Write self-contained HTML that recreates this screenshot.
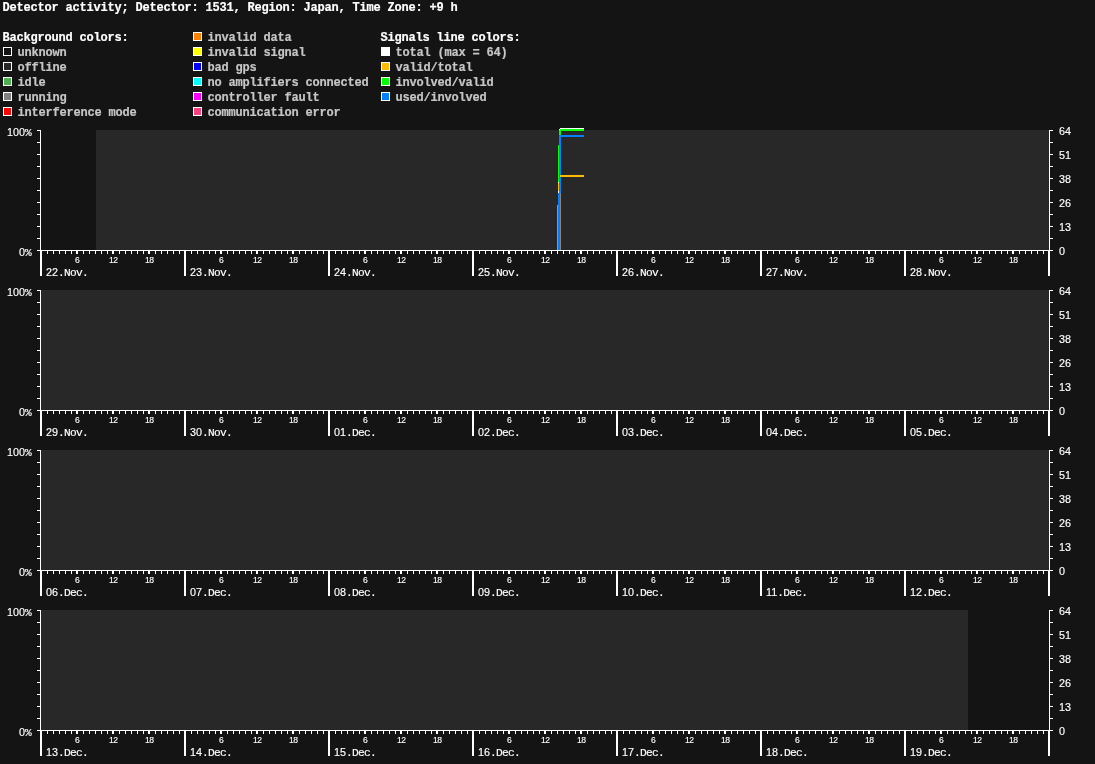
<!DOCTYPE html>
<html lang="en">
<head>
<meta charset="utf-8">
<title>Detector activity</title>
<style>
html,body{margin:0;padding:0;background:#141414;}
body{width:1095px;height:764px;position:relative;overflow:hidden;font-family:"Liberation Mono","DejaVu Sans Mono",monospace;color:#fff;}
svg{position:absolute;left:0;top:0;display:block;}
#labels{position:absolute;left:0;top:0;width:1095px;height:764px;will-change:transform;}
span{position:absolute;white-space:pre;display:block;margin:0;padding:0;}
.b{-webkit-text-stroke:0.2px currentColor;font-weight:bold;font-size:12px;letter-spacing:-0.2px;line-height:10px;height:10px;color:#c6c6c6;}
.h{color:#fff;}
.s{-webkit-text-stroke:0.15px #fff;font-size:11.2px;letter-spacing:-0.72px;line-height:9px;height:9px;}
.r{width:24px;text-align:right;}
.s b{font-family:"Liberation Sans","DejaVu Sans",sans-serif;font-weight:normal;font-size:10.79px;letter-spacing:0;}
.t{-webkit-text-stroke:0.12px #fff;font-family:"Liberation Sans","DejaVu Sans",sans-serif;font-size:8.6px;letter-spacing:-0.6px;line-height:6px;height:6px;}
</style>
</head>
<body>
<svg width="1095" height="764" viewBox="0 0 1095 764" shape-rendering="crispEdges">
<rect x="96" y="130" width="953" height="120" fill="#282828"/>
<rect x="560" y="128" width="24" height="1" fill="#ffffff"/>
<rect x="559" y="129" width="25" height="2" fill="#00ff00"/>
<rect x="559" y="129" width="2" height="7" fill="#00ff00"/>
<rect x="559" y="129" width="1" height="1" fill="#ffffff"/>
<rect x="558" y="145" width="1" height="37" fill="#00ff00"/>
<rect x="557" y="205" width="1" height="45" fill="#00ff00"/>
<rect x="558" y="182" width="1" height="1" fill="#ffffff"/>
<rect x="558" y="183" width="1" height="8" fill="#ffb900"/>
<rect x="558" y="191" width="1" height="2" fill="#ffffff"/>
<rect x="560" y="193" width="1" height="57" fill="#8c8378"/>
<rect x="559" y="135" width="25" height="2" fill="#0080ff"/>
<rect x="559" y="135" width="2" height="58" fill="#0080ff"/>
<rect x="558" y="193" width="2" height="57" fill="#0080ff"/>
<rect x="560" y="175" width="24" height="2" fill="#ffb900"/>
<rect x="40" y="130" width="1" height="121" fill="#fff"/>
<rect x="1049" y="130" width="1" height="121" fill="#fff"/>
<rect x="37" y="250" width="1016" height="1" fill="#fff"/>
<rect x="37" y="130" width="3" height="1" fill="#fff"/>
<rect x="1050" y="130" width="3" height="1" fill="#fff"/>
<rect x="37" y="142" width="3" height="1" fill="#fff"/>
<rect x="1050" y="142" width="3" height="1" fill="#fff"/>
<rect x="37" y="154" width="3" height="1" fill="#fff"/>
<rect x="1050" y="154" width="3" height="1" fill="#fff"/>
<rect x="37" y="166" width="3" height="1" fill="#fff"/>
<rect x="1050" y="166" width="3" height="1" fill="#fff"/>
<rect x="37" y="178" width="3" height="1" fill="#fff"/>
<rect x="1050" y="178" width="3" height="1" fill="#fff"/>
<rect x="37" y="190" width="3" height="1" fill="#fff"/>
<rect x="1050" y="190" width="3" height="1" fill="#fff"/>
<rect x="37" y="202" width="3" height="1" fill="#fff"/>
<rect x="1050" y="202" width="3" height="1" fill="#fff"/>
<rect x="37" y="214" width="3" height="1" fill="#fff"/>
<rect x="1050" y="214" width="3" height="1" fill="#fff"/>
<rect x="37" y="226" width="3" height="1" fill="#fff"/>
<rect x="1050" y="226" width="3" height="1" fill="#fff"/>
<rect x="37" y="238" width="3" height="1" fill="#fff"/>
<rect x="1050" y="238" width="3" height="1" fill="#fff"/>
<rect x="37" y="250" width="3" height="1" fill="#fff"/>
<rect x="1050" y="250" width="3" height="1" fill="#fff"/>
<rect x="40" y="251" width="2" height="25" fill="#fff"/>
<rect x="47" y="251" width="1" height="3" fill="#fff"/>
<rect x="53" y="251" width="1" height="3" fill="#fff"/>
<rect x="59" y="251" width="1" height="3" fill="#fff"/>
<rect x="65" y="251" width="1" height="3" fill="#fff"/>
<rect x="71" y="251" width="1" height="3" fill="#fff"/>
<rect x="76" y="251" width="2" height="3" fill="#fff"/>
<rect x="83" y="251" width="1" height="3" fill="#fff"/>
<rect x="89" y="251" width="1" height="3" fill="#fff"/>
<rect x="95" y="251" width="1" height="3" fill="#fff"/>
<rect x="101" y="251" width="1" height="3" fill="#fff"/>
<rect x="107" y="251" width="1" height="3" fill="#fff"/>
<rect x="112" y="251" width="2" height="3" fill="#fff"/>
<rect x="119" y="251" width="1" height="3" fill="#fff"/>
<rect x="125" y="251" width="1" height="3" fill="#fff"/>
<rect x="131" y="251" width="1" height="3" fill="#fff"/>
<rect x="137" y="251" width="1" height="3" fill="#fff"/>
<rect x="143" y="251" width="1" height="3" fill="#fff"/>
<rect x="148" y="251" width="2" height="3" fill="#fff"/>
<rect x="155" y="251" width="1" height="3" fill="#fff"/>
<rect x="161" y="251" width="1" height="3" fill="#fff"/>
<rect x="167" y="251" width="1" height="3" fill="#fff"/>
<rect x="173" y="251" width="1" height="3" fill="#fff"/>
<rect x="179" y="251" width="1" height="3" fill="#fff"/>
<rect x="184" y="251" width="2" height="25" fill="#fff"/>
<rect x="191" y="251" width="1" height="3" fill="#fff"/>
<rect x="197" y="251" width="1" height="3" fill="#fff"/>
<rect x="203" y="251" width="1" height="3" fill="#fff"/>
<rect x="209" y="251" width="1" height="3" fill="#fff"/>
<rect x="215" y="251" width="1" height="3" fill="#fff"/>
<rect x="220" y="251" width="2" height="3" fill="#fff"/>
<rect x="227" y="251" width="1" height="3" fill="#fff"/>
<rect x="233" y="251" width="1" height="3" fill="#fff"/>
<rect x="239" y="251" width="1" height="3" fill="#fff"/>
<rect x="245" y="251" width="1" height="3" fill="#fff"/>
<rect x="251" y="251" width="1" height="3" fill="#fff"/>
<rect x="256" y="251" width="2" height="3" fill="#fff"/>
<rect x="263" y="251" width="1" height="3" fill="#fff"/>
<rect x="269" y="251" width="1" height="3" fill="#fff"/>
<rect x="275" y="251" width="1" height="3" fill="#fff"/>
<rect x="281" y="251" width="1" height="3" fill="#fff"/>
<rect x="287" y="251" width="1" height="3" fill="#fff"/>
<rect x="292" y="251" width="2" height="3" fill="#fff"/>
<rect x="299" y="251" width="1" height="3" fill="#fff"/>
<rect x="305" y="251" width="1" height="3" fill="#fff"/>
<rect x="311" y="251" width="1" height="3" fill="#fff"/>
<rect x="317" y="251" width="1" height="3" fill="#fff"/>
<rect x="323" y="251" width="1" height="3" fill="#fff"/>
<rect x="328" y="251" width="2" height="25" fill="#fff"/>
<rect x="335" y="251" width="1" height="3" fill="#fff"/>
<rect x="341" y="251" width="1" height="3" fill="#fff"/>
<rect x="347" y="251" width="1" height="3" fill="#fff"/>
<rect x="353" y="251" width="1" height="3" fill="#fff"/>
<rect x="359" y="251" width="1" height="3" fill="#fff"/>
<rect x="364" y="251" width="2" height="3" fill="#fff"/>
<rect x="371" y="251" width="1" height="3" fill="#fff"/>
<rect x="377" y="251" width="1" height="3" fill="#fff"/>
<rect x="383" y="251" width="1" height="3" fill="#fff"/>
<rect x="389" y="251" width="1" height="3" fill="#fff"/>
<rect x="395" y="251" width="1" height="3" fill="#fff"/>
<rect x="400" y="251" width="2" height="3" fill="#fff"/>
<rect x="407" y="251" width="1" height="3" fill="#fff"/>
<rect x="413" y="251" width="1" height="3" fill="#fff"/>
<rect x="419" y="251" width="1" height="3" fill="#fff"/>
<rect x="425" y="251" width="1" height="3" fill="#fff"/>
<rect x="431" y="251" width="1" height="3" fill="#fff"/>
<rect x="436" y="251" width="2" height="3" fill="#fff"/>
<rect x="443" y="251" width="1" height="3" fill="#fff"/>
<rect x="449" y="251" width="1" height="3" fill="#fff"/>
<rect x="455" y="251" width="1" height="3" fill="#fff"/>
<rect x="461" y="251" width="1" height="3" fill="#fff"/>
<rect x="467" y="251" width="1" height="3" fill="#fff"/>
<rect x="472" y="251" width="2" height="25" fill="#fff"/>
<rect x="479" y="251" width="1" height="3" fill="#fff"/>
<rect x="485" y="251" width="1" height="3" fill="#fff"/>
<rect x="491" y="251" width="1" height="3" fill="#fff"/>
<rect x="497" y="251" width="1" height="3" fill="#fff"/>
<rect x="503" y="251" width="1" height="3" fill="#fff"/>
<rect x="508" y="251" width="2" height="3" fill="#fff"/>
<rect x="515" y="251" width="1" height="3" fill="#fff"/>
<rect x="521" y="251" width="1" height="3" fill="#fff"/>
<rect x="527" y="251" width="1" height="3" fill="#fff"/>
<rect x="533" y="251" width="1" height="3" fill="#fff"/>
<rect x="539" y="251" width="1" height="3" fill="#fff"/>
<rect x="544" y="251" width="2" height="3" fill="#fff"/>
<rect x="551" y="251" width="1" height="3" fill="#fff"/>
<rect x="557" y="251" width="1" height="3" fill="#fff"/>
<rect x="563" y="251" width="1" height="3" fill="#fff"/>
<rect x="569" y="251" width="1" height="3" fill="#fff"/>
<rect x="575" y="251" width="1" height="3" fill="#fff"/>
<rect x="580" y="251" width="2" height="3" fill="#fff"/>
<rect x="587" y="251" width="1" height="3" fill="#fff"/>
<rect x="593" y="251" width="1" height="3" fill="#fff"/>
<rect x="599" y="251" width="1" height="3" fill="#fff"/>
<rect x="605" y="251" width="1" height="3" fill="#fff"/>
<rect x="611" y="251" width="1" height="3" fill="#fff"/>
<rect x="616" y="251" width="2" height="25" fill="#fff"/>
<rect x="623" y="251" width="1" height="3" fill="#fff"/>
<rect x="629" y="251" width="1" height="3" fill="#fff"/>
<rect x="635" y="251" width="1" height="3" fill="#fff"/>
<rect x="641" y="251" width="1" height="3" fill="#fff"/>
<rect x="647" y="251" width="1" height="3" fill="#fff"/>
<rect x="652" y="251" width="2" height="3" fill="#fff"/>
<rect x="659" y="251" width="1" height="3" fill="#fff"/>
<rect x="665" y="251" width="1" height="3" fill="#fff"/>
<rect x="671" y="251" width="1" height="3" fill="#fff"/>
<rect x="677" y="251" width="1" height="3" fill="#fff"/>
<rect x="683" y="251" width="1" height="3" fill="#fff"/>
<rect x="688" y="251" width="2" height="3" fill="#fff"/>
<rect x="695" y="251" width="1" height="3" fill="#fff"/>
<rect x="701" y="251" width="1" height="3" fill="#fff"/>
<rect x="707" y="251" width="1" height="3" fill="#fff"/>
<rect x="713" y="251" width="1" height="3" fill="#fff"/>
<rect x="719" y="251" width="1" height="3" fill="#fff"/>
<rect x="724" y="251" width="2" height="3" fill="#fff"/>
<rect x="731" y="251" width="1" height="3" fill="#fff"/>
<rect x="737" y="251" width="1" height="3" fill="#fff"/>
<rect x="743" y="251" width="1" height="3" fill="#fff"/>
<rect x="749" y="251" width="1" height="3" fill="#fff"/>
<rect x="755" y="251" width="1" height="3" fill="#fff"/>
<rect x="760" y="251" width="2" height="25" fill="#fff"/>
<rect x="767" y="251" width="1" height="3" fill="#fff"/>
<rect x="773" y="251" width="1" height="3" fill="#fff"/>
<rect x="779" y="251" width="1" height="3" fill="#fff"/>
<rect x="785" y="251" width="1" height="3" fill="#fff"/>
<rect x="791" y="251" width="1" height="3" fill="#fff"/>
<rect x="796" y="251" width="2" height="3" fill="#fff"/>
<rect x="803" y="251" width="1" height="3" fill="#fff"/>
<rect x="809" y="251" width="1" height="3" fill="#fff"/>
<rect x="815" y="251" width="1" height="3" fill="#fff"/>
<rect x="821" y="251" width="1" height="3" fill="#fff"/>
<rect x="827" y="251" width="1" height="3" fill="#fff"/>
<rect x="832" y="251" width="2" height="3" fill="#fff"/>
<rect x="839" y="251" width="1" height="3" fill="#fff"/>
<rect x="845" y="251" width="1" height="3" fill="#fff"/>
<rect x="851" y="251" width="1" height="3" fill="#fff"/>
<rect x="857" y="251" width="1" height="3" fill="#fff"/>
<rect x="863" y="251" width="1" height="3" fill="#fff"/>
<rect x="868" y="251" width="2" height="3" fill="#fff"/>
<rect x="875" y="251" width="1" height="3" fill="#fff"/>
<rect x="881" y="251" width="1" height="3" fill="#fff"/>
<rect x="887" y="251" width="1" height="3" fill="#fff"/>
<rect x="893" y="251" width="1" height="3" fill="#fff"/>
<rect x="899" y="251" width="1" height="3" fill="#fff"/>
<rect x="904" y="251" width="2" height="25" fill="#fff"/>
<rect x="911" y="251" width="1" height="3" fill="#fff"/>
<rect x="917" y="251" width="1" height="3" fill="#fff"/>
<rect x="923" y="251" width="1" height="3" fill="#fff"/>
<rect x="929" y="251" width="1" height="3" fill="#fff"/>
<rect x="935" y="251" width="1" height="3" fill="#fff"/>
<rect x="940" y="251" width="2" height="3" fill="#fff"/>
<rect x="947" y="251" width="1" height="3" fill="#fff"/>
<rect x="953" y="251" width="1" height="3" fill="#fff"/>
<rect x="959" y="251" width="1" height="3" fill="#fff"/>
<rect x="965" y="251" width="1" height="3" fill="#fff"/>
<rect x="971" y="251" width="1" height="3" fill="#fff"/>
<rect x="976" y="251" width="2" height="3" fill="#fff"/>
<rect x="983" y="251" width="1" height="3" fill="#fff"/>
<rect x="989" y="251" width="1" height="3" fill="#fff"/>
<rect x="995" y="251" width="1" height="3" fill="#fff"/>
<rect x="1001" y="251" width="1" height="3" fill="#fff"/>
<rect x="1007" y="251" width="1" height="3" fill="#fff"/>
<rect x="1012" y="251" width="2" height="3" fill="#fff"/>
<rect x="1019" y="251" width="1" height="3" fill="#fff"/>
<rect x="1025" y="251" width="1" height="3" fill="#fff"/>
<rect x="1031" y="251" width="1" height="3" fill="#fff"/>
<rect x="1037" y="251" width="1" height="3" fill="#fff"/>
<rect x="1043" y="251" width="1" height="3" fill="#fff"/>
<rect x="1048" y="251" width="2" height="25" fill="#fff"/>
<rect x="41" y="290" width="1008" height="120" fill="#282828"/>
<rect x="40" y="290" width="1" height="121" fill="#fff"/>
<rect x="1049" y="290" width="1" height="121" fill="#fff"/>
<rect x="37" y="410" width="1016" height="1" fill="#fff"/>
<rect x="37" y="290" width="3" height="1" fill="#fff"/>
<rect x="1050" y="290" width="3" height="1" fill="#fff"/>
<rect x="37" y="302" width="3" height="1" fill="#fff"/>
<rect x="1050" y="302" width="3" height="1" fill="#fff"/>
<rect x="37" y="314" width="3" height="1" fill="#fff"/>
<rect x="1050" y="314" width="3" height="1" fill="#fff"/>
<rect x="37" y="326" width="3" height="1" fill="#fff"/>
<rect x="1050" y="326" width="3" height="1" fill="#fff"/>
<rect x="37" y="338" width="3" height="1" fill="#fff"/>
<rect x="1050" y="338" width="3" height="1" fill="#fff"/>
<rect x="37" y="350" width="3" height="1" fill="#fff"/>
<rect x="1050" y="350" width="3" height="1" fill="#fff"/>
<rect x="37" y="362" width="3" height="1" fill="#fff"/>
<rect x="1050" y="362" width="3" height="1" fill="#fff"/>
<rect x="37" y="374" width="3" height="1" fill="#fff"/>
<rect x="1050" y="374" width="3" height="1" fill="#fff"/>
<rect x="37" y="386" width="3" height="1" fill="#fff"/>
<rect x="1050" y="386" width="3" height="1" fill="#fff"/>
<rect x="37" y="398" width="3" height="1" fill="#fff"/>
<rect x="1050" y="398" width="3" height="1" fill="#fff"/>
<rect x="37" y="410" width="3" height="1" fill="#fff"/>
<rect x="1050" y="410" width="3" height="1" fill="#fff"/>
<rect x="40" y="411" width="2" height="25" fill="#fff"/>
<rect x="47" y="411" width="1" height="3" fill="#fff"/>
<rect x="53" y="411" width="1" height="3" fill="#fff"/>
<rect x="59" y="411" width="1" height="3" fill="#fff"/>
<rect x="65" y="411" width="1" height="3" fill="#fff"/>
<rect x="71" y="411" width="1" height="3" fill="#fff"/>
<rect x="76" y="411" width="2" height="3" fill="#fff"/>
<rect x="83" y="411" width="1" height="3" fill="#fff"/>
<rect x="89" y="411" width="1" height="3" fill="#fff"/>
<rect x="95" y="411" width="1" height="3" fill="#fff"/>
<rect x="101" y="411" width="1" height="3" fill="#fff"/>
<rect x="107" y="411" width="1" height="3" fill="#fff"/>
<rect x="112" y="411" width="2" height="3" fill="#fff"/>
<rect x="119" y="411" width="1" height="3" fill="#fff"/>
<rect x="125" y="411" width="1" height="3" fill="#fff"/>
<rect x="131" y="411" width="1" height="3" fill="#fff"/>
<rect x="137" y="411" width="1" height="3" fill="#fff"/>
<rect x="143" y="411" width="1" height="3" fill="#fff"/>
<rect x="148" y="411" width="2" height="3" fill="#fff"/>
<rect x="155" y="411" width="1" height="3" fill="#fff"/>
<rect x="161" y="411" width="1" height="3" fill="#fff"/>
<rect x="167" y="411" width="1" height="3" fill="#fff"/>
<rect x="173" y="411" width="1" height="3" fill="#fff"/>
<rect x="179" y="411" width="1" height="3" fill="#fff"/>
<rect x="184" y="411" width="2" height="25" fill="#fff"/>
<rect x="191" y="411" width="1" height="3" fill="#fff"/>
<rect x="197" y="411" width="1" height="3" fill="#fff"/>
<rect x="203" y="411" width="1" height="3" fill="#fff"/>
<rect x="209" y="411" width="1" height="3" fill="#fff"/>
<rect x="215" y="411" width="1" height="3" fill="#fff"/>
<rect x="220" y="411" width="2" height="3" fill="#fff"/>
<rect x="227" y="411" width="1" height="3" fill="#fff"/>
<rect x="233" y="411" width="1" height="3" fill="#fff"/>
<rect x="239" y="411" width="1" height="3" fill="#fff"/>
<rect x="245" y="411" width="1" height="3" fill="#fff"/>
<rect x="251" y="411" width="1" height="3" fill="#fff"/>
<rect x="256" y="411" width="2" height="3" fill="#fff"/>
<rect x="263" y="411" width="1" height="3" fill="#fff"/>
<rect x="269" y="411" width="1" height="3" fill="#fff"/>
<rect x="275" y="411" width="1" height="3" fill="#fff"/>
<rect x="281" y="411" width="1" height="3" fill="#fff"/>
<rect x="287" y="411" width="1" height="3" fill="#fff"/>
<rect x="292" y="411" width="2" height="3" fill="#fff"/>
<rect x="299" y="411" width="1" height="3" fill="#fff"/>
<rect x="305" y="411" width="1" height="3" fill="#fff"/>
<rect x="311" y="411" width="1" height="3" fill="#fff"/>
<rect x="317" y="411" width="1" height="3" fill="#fff"/>
<rect x="323" y="411" width="1" height="3" fill="#fff"/>
<rect x="328" y="411" width="2" height="25" fill="#fff"/>
<rect x="335" y="411" width="1" height="3" fill="#fff"/>
<rect x="341" y="411" width="1" height="3" fill="#fff"/>
<rect x="347" y="411" width="1" height="3" fill="#fff"/>
<rect x="353" y="411" width="1" height="3" fill="#fff"/>
<rect x="359" y="411" width="1" height="3" fill="#fff"/>
<rect x="364" y="411" width="2" height="3" fill="#fff"/>
<rect x="371" y="411" width="1" height="3" fill="#fff"/>
<rect x="377" y="411" width="1" height="3" fill="#fff"/>
<rect x="383" y="411" width="1" height="3" fill="#fff"/>
<rect x="389" y="411" width="1" height="3" fill="#fff"/>
<rect x="395" y="411" width="1" height="3" fill="#fff"/>
<rect x="400" y="411" width="2" height="3" fill="#fff"/>
<rect x="407" y="411" width="1" height="3" fill="#fff"/>
<rect x="413" y="411" width="1" height="3" fill="#fff"/>
<rect x="419" y="411" width="1" height="3" fill="#fff"/>
<rect x="425" y="411" width="1" height="3" fill="#fff"/>
<rect x="431" y="411" width="1" height="3" fill="#fff"/>
<rect x="436" y="411" width="2" height="3" fill="#fff"/>
<rect x="443" y="411" width="1" height="3" fill="#fff"/>
<rect x="449" y="411" width="1" height="3" fill="#fff"/>
<rect x="455" y="411" width="1" height="3" fill="#fff"/>
<rect x="461" y="411" width="1" height="3" fill="#fff"/>
<rect x="467" y="411" width="1" height="3" fill="#fff"/>
<rect x="472" y="411" width="2" height="25" fill="#fff"/>
<rect x="479" y="411" width="1" height="3" fill="#fff"/>
<rect x="485" y="411" width="1" height="3" fill="#fff"/>
<rect x="491" y="411" width="1" height="3" fill="#fff"/>
<rect x="497" y="411" width="1" height="3" fill="#fff"/>
<rect x="503" y="411" width="1" height="3" fill="#fff"/>
<rect x="508" y="411" width="2" height="3" fill="#fff"/>
<rect x="515" y="411" width="1" height="3" fill="#fff"/>
<rect x="521" y="411" width="1" height="3" fill="#fff"/>
<rect x="527" y="411" width="1" height="3" fill="#fff"/>
<rect x="533" y="411" width="1" height="3" fill="#fff"/>
<rect x="539" y="411" width="1" height="3" fill="#fff"/>
<rect x="544" y="411" width="2" height="3" fill="#fff"/>
<rect x="551" y="411" width="1" height="3" fill="#fff"/>
<rect x="557" y="411" width="1" height="3" fill="#fff"/>
<rect x="563" y="411" width="1" height="3" fill="#fff"/>
<rect x="569" y="411" width="1" height="3" fill="#fff"/>
<rect x="575" y="411" width="1" height="3" fill="#fff"/>
<rect x="580" y="411" width="2" height="3" fill="#fff"/>
<rect x="587" y="411" width="1" height="3" fill="#fff"/>
<rect x="593" y="411" width="1" height="3" fill="#fff"/>
<rect x="599" y="411" width="1" height="3" fill="#fff"/>
<rect x="605" y="411" width="1" height="3" fill="#fff"/>
<rect x="611" y="411" width="1" height="3" fill="#fff"/>
<rect x="616" y="411" width="2" height="25" fill="#fff"/>
<rect x="623" y="411" width="1" height="3" fill="#fff"/>
<rect x="629" y="411" width="1" height="3" fill="#fff"/>
<rect x="635" y="411" width="1" height="3" fill="#fff"/>
<rect x="641" y="411" width="1" height="3" fill="#fff"/>
<rect x="647" y="411" width="1" height="3" fill="#fff"/>
<rect x="652" y="411" width="2" height="3" fill="#fff"/>
<rect x="659" y="411" width="1" height="3" fill="#fff"/>
<rect x="665" y="411" width="1" height="3" fill="#fff"/>
<rect x="671" y="411" width="1" height="3" fill="#fff"/>
<rect x="677" y="411" width="1" height="3" fill="#fff"/>
<rect x="683" y="411" width="1" height="3" fill="#fff"/>
<rect x="688" y="411" width="2" height="3" fill="#fff"/>
<rect x="695" y="411" width="1" height="3" fill="#fff"/>
<rect x="701" y="411" width="1" height="3" fill="#fff"/>
<rect x="707" y="411" width="1" height="3" fill="#fff"/>
<rect x="713" y="411" width="1" height="3" fill="#fff"/>
<rect x="719" y="411" width="1" height="3" fill="#fff"/>
<rect x="724" y="411" width="2" height="3" fill="#fff"/>
<rect x="731" y="411" width="1" height="3" fill="#fff"/>
<rect x="737" y="411" width="1" height="3" fill="#fff"/>
<rect x="743" y="411" width="1" height="3" fill="#fff"/>
<rect x="749" y="411" width="1" height="3" fill="#fff"/>
<rect x="755" y="411" width="1" height="3" fill="#fff"/>
<rect x="760" y="411" width="2" height="25" fill="#fff"/>
<rect x="767" y="411" width="1" height="3" fill="#fff"/>
<rect x="773" y="411" width="1" height="3" fill="#fff"/>
<rect x="779" y="411" width="1" height="3" fill="#fff"/>
<rect x="785" y="411" width="1" height="3" fill="#fff"/>
<rect x="791" y="411" width="1" height="3" fill="#fff"/>
<rect x="796" y="411" width="2" height="3" fill="#fff"/>
<rect x="803" y="411" width="1" height="3" fill="#fff"/>
<rect x="809" y="411" width="1" height="3" fill="#fff"/>
<rect x="815" y="411" width="1" height="3" fill="#fff"/>
<rect x="821" y="411" width="1" height="3" fill="#fff"/>
<rect x="827" y="411" width="1" height="3" fill="#fff"/>
<rect x="832" y="411" width="2" height="3" fill="#fff"/>
<rect x="839" y="411" width="1" height="3" fill="#fff"/>
<rect x="845" y="411" width="1" height="3" fill="#fff"/>
<rect x="851" y="411" width="1" height="3" fill="#fff"/>
<rect x="857" y="411" width="1" height="3" fill="#fff"/>
<rect x="863" y="411" width="1" height="3" fill="#fff"/>
<rect x="868" y="411" width="2" height="3" fill="#fff"/>
<rect x="875" y="411" width="1" height="3" fill="#fff"/>
<rect x="881" y="411" width="1" height="3" fill="#fff"/>
<rect x="887" y="411" width="1" height="3" fill="#fff"/>
<rect x="893" y="411" width="1" height="3" fill="#fff"/>
<rect x="899" y="411" width="1" height="3" fill="#fff"/>
<rect x="904" y="411" width="2" height="25" fill="#fff"/>
<rect x="911" y="411" width="1" height="3" fill="#fff"/>
<rect x="917" y="411" width="1" height="3" fill="#fff"/>
<rect x="923" y="411" width="1" height="3" fill="#fff"/>
<rect x="929" y="411" width="1" height="3" fill="#fff"/>
<rect x="935" y="411" width="1" height="3" fill="#fff"/>
<rect x="940" y="411" width="2" height="3" fill="#fff"/>
<rect x="947" y="411" width="1" height="3" fill="#fff"/>
<rect x="953" y="411" width="1" height="3" fill="#fff"/>
<rect x="959" y="411" width="1" height="3" fill="#fff"/>
<rect x="965" y="411" width="1" height="3" fill="#fff"/>
<rect x="971" y="411" width="1" height="3" fill="#fff"/>
<rect x="976" y="411" width="2" height="3" fill="#fff"/>
<rect x="983" y="411" width="1" height="3" fill="#fff"/>
<rect x="989" y="411" width="1" height="3" fill="#fff"/>
<rect x="995" y="411" width="1" height="3" fill="#fff"/>
<rect x="1001" y="411" width="1" height="3" fill="#fff"/>
<rect x="1007" y="411" width="1" height="3" fill="#fff"/>
<rect x="1012" y="411" width="2" height="3" fill="#fff"/>
<rect x="1019" y="411" width="1" height="3" fill="#fff"/>
<rect x="1025" y="411" width="1" height="3" fill="#fff"/>
<rect x="1031" y="411" width="1" height="3" fill="#fff"/>
<rect x="1037" y="411" width="1" height="3" fill="#fff"/>
<rect x="1043" y="411" width="1" height="3" fill="#fff"/>
<rect x="1048" y="411" width="2" height="25" fill="#fff"/>
<rect x="41" y="450" width="1008" height="120" fill="#282828"/>
<rect x="40" y="450" width="1" height="121" fill="#fff"/>
<rect x="1049" y="450" width="1" height="121" fill="#fff"/>
<rect x="37" y="570" width="1016" height="1" fill="#fff"/>
<rect x="37" y="450" width="3" height="1" fill="#fff"/>
<rect x="1050" y="450" width="3" height="1" fill="#fff"/>
<rect x="37" y="462" width="3" height="1" fill="#fff"/>
<rect x="1050" y="462" width="3" height="1" fill="#fff"/>
<rect x="37" y="474" width="3" height="1" fill="#fff"/>
<rect x="1050" y="474" width="3" height="1" fill="#fff"/>
<rect x="37" y="486" width="3" height="1" fill="#fff"/>
<rect x="1050" y="486" width="3" height="1" fill="#fff"/>
<rect x="37" y="498" width="3" height="1" fill="#fff"/>
<rect x="1050" y="498" width="3" height="1" fill="#fff"/>
<rect x="37" y="510" width="3" height="1" fill="#fff"/>
<rect x="1050" y="510" width="3" height="1" fill="#fff"/>
<rect x="37" y="522" width="3" height="1" fill="#fff"/>
<rect x="1050" y="522" width="3" height="1" fill="#fff"/>
<rect x="37" y="534" width="3" height="1" fill="#fff"/>
<rect x="1050" y="534" width="3" height="1" fill="#fff"/>
<rect x="37" y="546" width="3" height="1" fill="#fff"/>
<rect x="1050" y="546" width="3" height="1" fill="#fff"/>
<rect x="37" y="558" width="3" height="1" fill="#fff"/>
<rect x="1050" y="558" width="3" height="1" fill="#fff"/>
<rect x="37" y="570" width="3" height="1" fill="#fff"/>
<rect x="1050" y="570" width="3" height="1" fill="#fff"/>
<rect x="40" y="571" width="2" height="25" fill="#fff"/>
<rect x="47" y="571" width="1" height="3" fill="#fff"/>
<rect x="53" y="571" width="1" height="3" fill="#fff"/>
<rect x="59" y="571" width="1" height="3" fill="#fff"/>
<rect x="65" y="571" width="1" height="3" fill="#fff"/>
<rect x="71" y="571" width="1" height="3" fill="#fff"/>
<rect x="76" y="571" width="2" height="3" fill="#fff"/>
<rect x="83" y="571" width="1" height="3" fill="#fff"/>
<rect x="89" y="571" width="1" height="3" fill="#fff"/>
<rect x="95" y="571" width="1" height="3" fill="#fff"/>
<rect x="101" y="571" width="1" height="3" fill="#fff"/>
<rect x="107" y="571" width="1" height="3" fill="#fff"/>
<rect x="112" y="571" width="2" height="3" fill="#fff"/>
<rect x="119" y="571" width="1" height="3" fill="#fff"/>
<rect x="125" y="571" width="1" height="3" fill="#fff"/>
<rect x="131" y="571" width="1" height="3" fill="#fff"/>
<rect x="137" y="571" width="1" height="3" fill="#fff"/>
<rect x="143" y="571" width="1" height="3" fill="#fff"/>
<rect x="148" y="571" width="2" height="3" fill="#fff"/>
<rect x="155" y="571" width="1" height="3" fill="#fff"/>
<rect x="161" y="571" width="1" height="3" fill="#fff"/>
<rect x="167" y="571" width="1" height="3" fill="#fff"/>
<rect x="173" y="571" width="1" height="3" fill="#fff"/>
<rect x="179" y="571" width="1" height="3" fill="#fff"/>
<rect x="184" y="571" width="2" height="25" fill="#fff"/>
<rect x="191" y="571" width="1" height="3" fill="#fff"/>
<rect x="197" y="571" width="1" height="3" fill="#fff"/>
<rect x="203" y="571" width="1" height="3" fill="#fff"/>
<rect x="209" y="571" width="1" height="3" fill="#fff"/>
<rect x="215" y="571" width="1" height="3" fill="#fff"/>
<rect x="220" y="571" width="2" height="3" fill="#fff"/>
<rect x="227" y="571" width="1" height="3" fill="#fff"/>
<rect x="233" y="571" width="1" height="3" fill="#fff"/>
<rect x="239" y="571" width="1" height="3" fill="#fff"/>
<rect x="245" y="571" width="1" height="3" fill="#fff"/>
<rect x="251" y="571" width="1" height="3" fill="#fff"/>
<rect x="256" y="571" width="2" height="3" fill="#fff"/>
<rect x="263" y="571" width="1" height="3" fill="#fff"/>
<rect x="269" y="571" width="1" height="3" fill="#fff"/>
<rect x="275" y="571" width="1" height="3" fill="#fff"/>
<rect x="281" y="571" width="1" height="3" fill="#fff"/>
<rect x="287" y="571" width="1" height="3" fill="#fff"/>
<rect x="292" y="571" width="2" height="3" fill="#fff"/>
<rect x="299" y="571" width="1" height="3" fill="#fff"/>
<rect x="305" y="571" width="1" height="3" fill="#fff"/>
<rect x="311" y="571" width="1" height="3" fill="#fff"/>
<rect x="317" y="571" width="1" height="3" fill="#fff"/>
<rect x="323" y="571" width="1" height="3" fill="#fff"/>
<rect x="328" y="571" width="2" height="25" fill="#fff"/>
<rect x="335" y="571" width="1" height="3" fill="#fff"/>
<rect x="341" y="571" width="1" height="3" fill="#fff"/>
<rect x="347" y="571" width="1" height="3" fill="#fff"/>
<rect x="353" y="571" width="1" height="3" fill="#fff"/>
<rect x="359" y="571" width="1" height="3" fill="#fff"/>
<rect x="364" y="571" width="2" height="3" fill="#fff"/>
<rect x="371" y="571" width="1" height="3" fill="#fff"/>
<rect x="377" y="571" width="1" height="3" fill="#fff"/>
<rect x="383" y="571" width="1" height="3" fill="#fff"/>
<rect x="389" y="571" width="1" height="3" fill="#fff"/>
<rect x="395" y="571" width="1" height="3" fill="#fff"/>
<rect x="400" y="571" width="2" height="3" fill="#fff"/>
<rect x="407" y="571" width="1" height="3" fill="#fff"/>
<rect x="413" y="571" width="1" height="3" fill="#fff"/>
<rect x="419" y="571" width="1" height="3" fill="#fff"/>
<rect x="425" y="571" width="1" height="3" fill="#fff"/>
<rect x="431" y="571" width="1" height="3" fill="#fff"/>
<rect x="436" y="571" width="2" height="3" fill="#fff"/>
<rect x="443" y="571" width="1" height="3" fill="#fff"/>
<rect x="449" y="571" width="1" height="3" fill="#fff"/>
<rect x="455" y="571" width="1" height="3" fill="#fff"/>
<rect x="461" y="571" width="1" height="3" fill="#fff"/>
<rect x="467" y="571" width="1" height="3" fill="#fff"/>
<rect x="472" y="571" width="2" height="25" fill="#fff"/>
<rect x="479" y="571" width="1" height="3" fill="#fff"/>
<rect x="485" y="571" width="1" height="3" fill="#fff"/>
<rect x="491" y="571" width="1" height="3" fill="#fff"/>
<rect x="497" y="571" width="1" height="3" fill="#fff"/>
<rect x="503" y="571" width="1" height="3" fill="#fff"/>
<rect x="508" y="571" width="2" height="3" fill="#fff"/>
<rect x="515" y="571" width="1" height="3" fill="#fff"/>
<rect x="521" y="571" width="1" height="3" fill="#fff"/>
<rect x="527" y="571" width="1" height="3" fill="#fff"/>
<rect x="533" y="571" width="1" height="3" fill="#fff"/>
<rect x="539" y="571" width="1" height="3" fill="#fff"/>
<rect x="544" y="571" width="2" height="3" fill="#fff"/>
<rect x="551" y="571" width="1" height="3" fill="#fff"/>
<rect x="557" y="571" width="1" height="3" fill="#fff"/>
<rect x="563" y="571" width="1" height="3" fill="#fff"/>
<rect x="569" y="571" width="1" height="3" fill="#fff"/>
<rect x="575" y="571" width="1" height="3" fill="#fff"/>
<rect x="580" y="571" width="2" height="3" fill="#fff"/>
<rect x="587" y="571" width="1" height="3" fill="#fff"/>
<rect x="593" y="571" width="1" height="3" fill="#fff"/>
<rect x="599" y="571" width="1" height="3" fill="#fff"/>
<rect x="605" y="571" width="1" height="3" fill="#fff"/>
<rect x="611" y="571" width="1" height="3" fill="#fff"/>
<rect x="616" y="571" width="2" height="25" fill="#fff"/>
<rect x="623" y="571" width="1" height="3" fill="#fff"/>
<rect x="629" y="571" width="1" height="3" fill="#fff"/>
<rect x="635" y="571" width="1" height="3" fill="#fff"/>
<rect x="641" y="571" width="1" height="3" fill="#fff"/>
<rect x="647" y="571" width="1" height="3" fill="#fff"/>
<rect x="652" y="571" width="2" height="3" fill="#fff"/>
<rect x="659" y="571" width="1" height="3" fill="#fff"/>
<rect x="665" y="571" width="1" height="3" fill="#fff"/>
<rect x="671" y="571" width="1" height="3" fill="#fff"/>
<rect x="677" y="571" width="1" height="3" fill="#fff"/>
<rect x="683" y="571" width="1" height="3" fill="#fff"/>
<rect x="688" y="571" width="2" height="3" fill="#fff"/>
<rect x="695" y="571" width="1" height="3" fill="#fff"/>
<rect x="701" y="571" width="1" height="3" fill="#fff"/>
<rect x="707" y="571" width="1" height="3" fill="#fff"/>
<rect x="713" y="571" width="1" height="3" fill="#fff"/>
<rect x="719" y="571" width="1" height="3" fill="#fff"/>
<rect x="724" y="571" width="2" height="3" fill="#fff"/>
<rect x="731" y="571" width="1" height="3" fill="#fff"/>
<rect x="737" y="571" width="1" height="3" fill="#fff"/>
<rect x="743" y="571" width="1" height="3" fill="#fff"/>
<rect x="749" y="571" width="1" height="3" fill="#fff"/>
<rect x="755" y="571" width="1" height="3" fill="#fff"/>
<rect x="760" y="571" width="2" height="25" fill="#fff"/>
<rect x="767" y="571" width="1" height="3" fill="#fff"/>
<rect x="773" y="571" width="1" height="3" fill="#fff"/>
<rect x="779" y="571" width="1" height="3" fill="#fff"/>
<rect x="785" y="571" width="1" height="3" fill="#fff"/>
<rect x="791" y="571" width="1" height="3" fill="#fff"/>
<rect x="796" y="571" width="2" height="3" fill="#fff"/>
<rect x="803" y="571" width="1" height="3" fill="#fff"/>
<rect x="809" y="571" width="1" height="3" fill="#fff"/>
<rect x="815" y="571" width="1" height="3" fill="#fff"/>
<rect x="821" y="571" width="1" height="3" fill="#fff"/>
<rect x="827" y="571" width="1" height="3" fill="#fff"/>
<rect x="832" y="571" width="2" height="3" fill="#fff"/>
<rect x="839" y="571" width="1" height="3" fill="#fff"/>
<rect x="845" y="571" width="1" height="3" fill="#fff"/>
<rect x="851" y="571" width="1" height="3" fill="#fff"/>
<rect x="857" y="571" width="1" height="3" fill="#fff"/>
<rect x="863" y="571" width="1" height="3" fill="#fff"/>
<rect x="868" y="571" width="2" height="3" fill="#fff"/>
<rect x="875" y="571" width="1" height="3" fill="#fff"/>
<rect x="881" y="571" width="1" height="3" fill="#fff"/>
<rect x="887" y="571" width="1" height="3" fill="#fff"/>
<rect x="893" y="571" width="1" height="3" fill="#fff"/>
<rect x="899" y="571" width="1" height="3" fill="#fff"/>
<rect x="904" y="571" width="2" height="25" fill="#fff"/>
<rect x="911" y="571" width="1" height="3" fill="#fff"/>
<rect x="917" y="571" width="1" height="3" fill="#fff"/>
<rect x="923" y="571" width="1" height="3" fill="#fff"/>
<rect x="929" y="571" width="1" height="3" fill="#fff"/>
<rect x="935" y="571" width="1" height="3" fill="#fff"/>
<rect x="940" y="571" width="2" height="3" fill="#fff"/>
<rect x="947" y="571" width="1" height="3" fill="#fff"/>
<rect x="953" y="571" width="1" height="3" fill="#fff"/>
<rect x="959" y="571" width="1" height="3" fill="#fff"/>
<rect x="965" y="571" width="1" height="3" fill="#fff"/>
<rect x="971" y="571" width="1" height="3" fill="#fff"/>
<rect x="976" y="571" width="2" height="3" fill="#fff"/>
<rect x="983" y="571" width="1" height="3" fill="#fff"/>
<rect x="989" y="571" width="1" height="3" fill="#fff"/>
<rect x="995" y="571" width="1" height="3" fill="#fff"/>
<rect x="1001" y="571" width="1" height="3" fill="#fff"/>
<rect x="1007" y="571" width="1" height="3" fill="#fff"/>
<rect x="1012" y="571" width="2" height="3" fill="#fff"/>
<rect x="1019" y="571" width="1" height="3" fill="#fff"/>
<rect x="1025" y="571" width="1" height="3" fill="#fff"/>
<rect x="1031" y="571" width="1" height="3" fill="#fff"/>
<rect x="1037" y="571" width="1" height="3" fill="#fff"/>
<rect x="1043" y="571" width="1" height="3" fill="#fff"/>
<rect x="1048" y="571" width="2" height="25" fill="#fff"/>
<rect x="41" y="610" width="927" height="120" fill="#282828"/>
<rect x="40" y="610" width="1" height="121" fill="#fff"/>
<rect x="1049" y="610" width="1" height="121" fill="#fff"/>
<rect x="37" y="730" width="1016" height="1" fill="#fff"/>
<rect x="37" y="610" width="3" height="1" fill="#fff"/>
<rect x="1050" y="610" width="3" height="1" fill="#fff"/>
<rect x="37" y="622" width="3" height="1" fill="#fff"/>
<rect x="1050" y="622" width="3" height="1" fill="#fff"/>
<rect x="37" y="634" width="3" height="1" fill="#fff"/>
<rect x="1050" y="634" width="3" height="1" fill="#fff"/>
<rect x="37" y="646" width="3" height="1" fill="#fff"/>
<rect x="1050" y="646" width="3" height="1" fill="#fff"/>
<rect x="37" y="658" width="3" height="1" fill="#fff"/>
<rect x="1050" y="658" width="3" height="1" fill="#fff"/>
<rect x="37" y="670" width="3" height="1" fill="#fff"/>
<rect x="1050" y="670" width="3" height="1" fill="#fff"/>
<rect x="37" y="682" width="3" height="1" fill="#fff"/>
<rect x="1050" y="682" width="3" height="1" fill="#fff"/>
<rect x="37" y="694" width="3" height="1" fill="#fff"/>
<rect x="1050" y="694" width="3" height="1" fill="#fff"/>
<rect x="37" y="706" width="3" height="1" fill="#fff"/>
<rect x="1050" y="706" width="3" height="1" fill="#fff"/>
<rect x="37" y="718" width="3" height="1" fill="#fff"/>
<rect x="1050" y="718" width="3" height="1" fill="#fff"/>
<rect x="37" y="730" width="3" height="1" fill="#fff"/>
<rect x="1050" y="730" width="3" height="1" fill="#fff"/>
<rect x="40" y="731" width="2" height="25" fill="#fff"/>
<rect x="47" y="731" width="1" height="3" fill="#fff"/>
<rect x="53" y="731" width="1" height="3" fill="#fff"/>
<rect x="59" y="731" width="1" height="3" fill="#fff"/>
<rect x="65" y="731" width="1" height="3" fill="#fff"/>
<rect x="71" y="731" width="1" height="3" fill="#fff"/>
<rect x="76" y="731" width="2" height="3" fill="#fff"/>
<rect x="83" y="731" width="1" height="3" fill="#fff"/>
<rect x="89" y="731" width="1" height="3" fill="#fff"/>
<rect x="95" y="731" width="1" height="3" fill="#fff"/>
<rect x="101" y="731" width="1" height="3" fill="#fff"/>
<rect x="107" y="731" width="1" height="3" fill="#fff"/>
<rect x="112" y="731" width="2" height="3" fill="#fff"/>
<rect x="119" y="731" width="1" height="3" fill="#fff"/>
<rect x="125" y="731" width="1" height="3" fill="#fff"/>
<rect x="131" y="731" width="1" height="3" fill="#fff"/>
<rect x="137" y="731" width="1" height="3" fill="#fff"/>
<rect x="143" y="731" width="1" height="3" fill="#fff"/>
<rect x="148" y="731" width="2" height="3" fill="#fff"/>
<rect x="155" y="731" width="1" height="3" fill="#fff"/>
<rect x="161" y="731" width="1" height="3" fill="#fff"/>
<rect x="167" y="731" width="1" height="3" fill="#fff"/>
<rect x="173" y="731" width="1" height="3" fill="#fff"/>
<rect x="179" y="731" width="1" height="3" fill="#fff"/>
<rect x="184" y="731" width="2" height="25" fill="#fff"/>
<rect x="191" y="731" width="1" height="3" fill="#fff"/>
<rect x="197" y="731" width="1" height="3" fill="#fff"/>
<rect x="203" y="731" width="1" height="3" fill="#fff"/>
<rect x="209" y="731" width="1" height="3" fill="#fff"/>
<rect x="215" y="731" width="1" height="3" fill="#fff"/>
<rect x="220" y="731" width="2" height="3" fill="#fff"/>
<rect x="227" y="731" width="1" height="3" fill="#fff"/>
<rect x="233" y="731" width="1" height="3" fill="#fff"/>
<rect x="239" y="731" width="1" height="3" fill="#fff"/>
<rect x="245" y="731" width="1" height="3" fill="#fff"/>
<rect x="251" y="731" width="1" height="3" fill="#fff"/>
<rect x="256" y="731" width="2" height="3" fill="#fff"/>
<rect x="263" y="731" width="1" height="3" fill="#fff"/>
<rect x="269" y="731" width="1" height="3" fill="#fff"/>
<rect x="275" y="731" width="1" height="3" fill="#fff"/>
<rect x="281" y="731" width="1" height="3" fill="#fff"/>
<rect x="287" y="731" width="1" height="3" fill="#fff"/>
<rect x="292" y="731" width="2" height="3" fill="#fff"/>
<rect x="299" y="731" width="1" height="3" fill="#fff"/>
<rect x="305" y="731" width="1" height="3" fill="#fff"/>
<rect x="311" y="731" width="1" height="3" fill="#fff"/>
<rect x="317" y="731" width="1" height="3" fill="#fff"/>
<rect x="323" y="731" width="1" height="3" fill="#fff"/>
<rect x="328" y="731" width="2" height="25" fill="#fff"/>
<rect x="335" y="731" width="1" height="3" fill="#fff"/>
<rect x="341" y="731" width="1" height="3" fill="#fff"/>
<rect x="347" y="731" width="1" height="3" fill="#fff"/>
<rect x="353" y="731" width="1" height="3" fill="#fff"/>
<rect x="359" y="731" width="1" height="3" fill="#fff"/>
<rect x="364" y="731" width="2" height="3" fill="#fff"/>
<rect x="371" y="731" width="1" height="3" fill="#fff"/>
<rect x="377" y="731" width="1" height="3" fill="#fff"/>
<rect x="383" y="731" width="1" height="3" fill="#fff"/>
<rect x="389" y="731" width="1" height="3" fill="#fff"/>
<rect x="395" y="731" width="1" height="3" fill="#fff"/>
<rect x="400" y="731" width="2" height="3" fill="#fff"/>
<rect x="407" y="731" width="1" height="3" fill="#fff"/>
<rect x="413" y="731" width="1" height="3" fill="#fff"/>
<rect x="419" y="731" width="1" height="3" fill="#fff"/>
<rect x="425" y="731" width="1" height="3" fill="#fff"/>
<rect x="431" y="731" width="1" height="3" fill="#fff"/>
<rect x="436" y="731" width="2" height="3" fill="#fff"/>
<rect x="443" y="731" width="1" height="3" fill="#fff"/>
<rect x="449" y="731" width="1" height="3" fill="#fff"/>
<rect x="455" y="731" width="1" height="3" fill="#fff"/>
<rect x="461" y="731" width="1" height="3" fill="#fff"/>
<rect x="467" y="731" width="1" height="3" fill="#fff"/>
<rect x="472" y="731" width="2" height="25" fill="#fff"/>
<rect x="479" y="731" width="1" height="3" fill="#fff"/>
<rect x="485" y="731" width="1" height="3" fill="#fff"/>
<rect x="491" y="731" width="1" height="3" fill="#fff"/>
<rect x="497" y="731" width="1" height="3" fill="#fff"/>
<rect x="503" y="731" width="1" height="3" fill="#fff"/>
<rect x="508" y="731" width="2" height="3" fill="#fff"/>
<rect x="515" y="731" width="1" height="3" fill="#fff"/>
<rect x="521" y="731" width="1" height="3" fill="#fff"/>
<rect x="527" y="731" width="1" height="3" fill="#fff"/>
<rect x="533" y="731" width="1" height="3" fill="#fff"/>
<rect x="539" y="731" width="1" height="3" fill="#fff"/>
<rect x="544" y="731" width="2" height="3" fill="#fff"/>
<rect x="551" y="731" width="1" height="3" fill="#fff"/>
<rect x="557" y="731" width="1" height="3" fill="#fff"/>
<rect x="563" y="731" width="1" height="3" fill="#fff"/>
<rect x="569" y="731" width="1" height="3" fill="#fff"/>
<rect x="575" y="731" width="1" height="3" fill="#fff"/>
<rect x="580" y="731" width="2" height="3" fill="#fff"/>
<rect x="587" y="731" width="1" height="3" fill="#fff"/>
<rect x="593" y="731" width="1" height="3" fill="#fff"/>
<rect x="599" y="731" width="1" height="3" fill="#fff"/>
<rect x="605" y="731" width="1" height="3" fill="#fff"/>
<rect x="611" y="731" width="1" height="3" fill="#fff"/>
<rect x="616" y="731" width="2" height="25" fill="#fff"/>
<rect x="623" y="731" width="1" height="3" fill="#fff"/>
<rect x="629" y="731" width="1" height="3" fill="#fff"/>
<rect x="635" y="731" width="1" height="3" fill="#fff"/>
<rect x="641" y="731" width="1" height="3" fill="#fff"/>
<rect x="647" y="731" width="1" height="3" fill="#fff"/>
<rect x="652" y="731" width="2" height="3" fill="#fff"/>
<rect x="659" y="731" width="1" height="3" fill="#fff"/>
<rect x="665" y="731" width="1" height="3" fill="#fff"/>
<rect x="671" y="731" width="1" height="3" fill="#fff"/>
<rect x="677" y="731" width="1" height="3" fill="#fff"/>
<rect x="683" y="731" width="1" height="3" fill="#fff"/>
<rect x="688" y="731" width="2" height="3" fill="#fff"/>
<rect x="695" y="731" width="1" height="3" fill="#fff"/>
<rect x="701" y="731" width="1" height="3" fill="#fff"/>
<rect x="707" y="731" width="1" height="3" fill="#fff"/>
<rect x="713" y="731" width="1" height="3" fill="#fff"/>
<rect x="719" y="731" width="1" height="3" fill="#fff"/>
<rect x="724" y="731" width="2" height="3" fill="#fff"/>
<rect x="731" y="731" width="1" height="3" fill="#fff"/>
<rect x="737" y="731" width="1" height="3" fill="#fff"/>
<rect x="743" y="731" width="1" height="3" fill="#fff"/>
<rect x="749" y="731" width="1" height="3" fill="#fff"/>
<rect x="755" y="731" width="1" height="3" fill="#fff"/>
<rect x="760" y="731" width="2" height="25" fill="#fff"/>
<rect x="767" y="731" width="1" height="3" fill="#fff"/>
<rect x="773" y="731" width="1" height="3" fill="#fff"/>
<rect x="779" y="731" width="1" height="3" fill="#fff"/>
<rect x="785" y="731" width="1" height="3" fill="#fff"/>
<rect x="791" y="731" width="1" height="3" fill="#fff"/>
<rect x="796" y="731" width="2" height="3" fill="#fff"/>
<rect x="803" y="731" width="1" height="3" fill="#fff"/>
<rect x="809" y="731" width="1" height="3" fill="#fff"/>
<rect x="815" y="731" width="1" height="3" fill="#fff"/>
<rect x="821" y="731" width="1" height="3" fill="#fff"/>
<rect x="827" y="731" width="1" height="3" fill="#fff"/>
<rect x="832" y="731" width="2" height="3" fill="#fff"/>
<rect x="839" y="731" width="1" height="3" fill="#fff"/>
<rect x="845" y="731" width="1" height="3" fill="#fff"/>
<rect x="851" y="731" width="1" height="3" fill="#fff"/>
<rect x="857" y="731" width="1" height="3" fill="#fff"/>
<rect x="863" y="731" width="1" height="3" fill="#fff"/>
<rect x="868" y="731" width="2" height="3" fill="#fff"/>
<rect x="875" y="731" width="1" height="3" fill="#fff"/>
<rect x="881" y="731" width="1" height="3" fill="#fff"/>
<rect x="887" y="731" width="1" height="3" fill="#fff"/>
<rect x="893" y="731" width="1" height="3" fill="#fff"/>
<rect x="899" y="731" width="1" height="3" fill="#fff"/>
<rect x="904" y="731" width="2" height="25" fill="#fff"/>
<rect x="911" y="731" width="1" height="3" fill="#fff"/>
<rect x="917" y="731" width="1" height="3" fill="#fff"/>
<rect x="923" y="731" width="1" height="3" fill="#fff"/>
<rect x="929" y="731" width="1" height="3" fill="#fff"/>
<rect x="935" y="731" width="1" height="3" fill="#fff"/>
<rect x="940" y="731" width="2" height="3" fill="#fff"/>
<rect x="947" y="731" width="1" height="3" fill="#fff"/>
<rect x="953" y="731" width="1" height="3" fill="#fff"/>
<rect x="959" y="731" width="1" height="3" fill="#fff"/>
<rect x="965" y="731" width="1" height="3" fill="#fff"/>
<rect x="971" y="731" width="1" height="3" fill="#fff"/>
<rect x="976" y="731" width="2" height="3" fill="#fff"/>
<rect x="983" y="731" width="1" height="3" fill="#fff"/>
<rect x="989" y="731" width="1" height="3" fill="#fff"/>
<rect x="995" y="731" width="1" height="3" fill="#fff"/>
<rect x="1001" y="731" width="1" height="3" fill="#fff"/>
<rect x="1007" y="731" width="1" height="3" fill="#fff"/>
<rect x="1012" y="731" width="2" height="3" fill="#fff"/>
<rect x="1019" y="731" width="1" height="3" fill="#fff"/>
<rect x="1025" y="731" width="1" height="3" fill="#fff"/>
<rect x="1031" y="731" width="1" height="3" fill="#fff"/>
<rect x="1037" y="731" width="1" height="3" fill="#fff"/>
<rect x="1043" y="731" width="1" height="3" fill="#fff"/>
<rect x="1048" y="731" width="2" height="25" fill="#fff"/>
<rect x="3" y="47" width="9" height="9" fill="#ffffff"/>
<rect x="4" y="48" width="7" height="7" fill="#141414"/>
<rect x="3" y="62" width="9" height="9" fill="#ffffff"/>
<rect x="4" y="63" width="7" height="7" fill="#282828"/>
<rect x="3" y="77" width="9" height="9" fill="#ffffff"/>
<rect x="4" y="78" width="7" height="7" fill="#4caf50"/>
<rect x="3" y="92" width="9" height="9" fill="#ffffff"/>
<rect x="4" y="93" width="7" height="7" fill="#808080"/>
<rect x="3" y="107" width="9" height="9" fill="#ffffff"/>
<rect x="4" y="108" width="7" height="7" fill="#ff0000"/>
<rect x="193" y="32" width="9" height="9" fill="#ffffff"/>
<rect x="194" y="33" width="7" height="7" fill="#ff8000"/>
<rect x="193" y="47" width="9" height="9" fill="#ffffff"/>
<rect x="194" y="48" width="7" height="7" fill="#ffff00"/>
<rect x="193" y="62" width="9" height="9" fill="#ffffff"/>
<rect x="194" y="63" width="7" height="7" fill="#0000ff"/>
<rect x="193" y="77" width="9" height="9" fill="#ffffff"/>
<rect x="194" y="78" width="7" height="7" fill="#00ffff"/>
<rect x="193" y="92" width="9" height="9" fill="#ffffff"/>
<rect x="194" y="93" width="7" height="7" fill="#ff00ff"/>
<rect x="193" y="107" width="9" height="9" fill="#ffffff"/>
<rect x="194" y="108" width="7" height="7" fill="#ff4080"/>
<rect x="381" y="47" width="9" height="9" fill="#ffffff"/>
<rect x="382" y="48" width="7" height="7" fill="#ffffff"/>
<rect x="381" y="62" width="9" height="9" fill="#ffffff"/>
<rect x="382" y="63" width="7" height="7" fill="#ffb900"/>
<rect x="381" y="77" width="9" height="9" fill="#ffffff"/>
<rect x="382" y="78" width="7" height="7" fill="#00ff00"/>
<rect x="381" y="92" width="9" height="9" fill="#ffffff"/>
<rect x="382" y="93" width="7" height="7" fill="#0080ff"/>
</svg>
<div id="labels">
<span class="s r" style="left:7px;top:128px;"><b>100</b>%</span>
<span class="s r" style="left:7px;top:248px;"><b>0</b>%</span>
<span class="s" style="left:1059px;top:127px;"><b>64</b></span>
<span class="s" style="left:1059px;top:151px;"><b>51</b></span>
<span class="s" style="left:1059px;top:175px;"><b>38</b></span>
<span class="s" style="left:1059px;top:199px;"><b>26</b></span>
<span class="s" style="left:1059px;top:223px;"><b>13</b></span>
<span class="s" style="left:1059px;top:247px;"><b>0</b></span>
<span class="s d" style="left:46px;top:268px;"><b>22</b>.Nov.</span>
<span class="t" style="left:75px;top:257px;">6</span>
<span class="t" style="left:109px;top:257px;">12</span>
<span class="t" style="left:145px;top:257px;">18</span>
<span class="s d" style="left:190px;top:268px;"><b>23</b>.Nov.</span>
<span class="t" style="left:219px;top:257px;">6</span>
<span class="t" style="left:253px;top:257px;">12</span>
<span class="t" style="left:289px;top:257px;">18</span>
<span class="s d" style="left:334px;top:268px;"><b>24</b>.Nov.</span>
<span class="t" style="left:363px;top:257px;">6</span>
<span class="t" style="left:397px;top:257px;">12</span>
<span class="t" style="left:433px;top:257px;">18</span>
<span class="s d" style="left:478px;top:268px;"><b>25</b>.Nov.</span>
<span class="t" style="left:507px;top:257px;">6</span>
<span class="t" style="left:541px;top:257px;">12</span>
<span class="t" style="left:577px;top:257px;">18</span>
<span class="s d" style="left:622px;top:268px;"><b>26</b>.Nov.</span>
<span class="t" style="left:651px;top:257px;">6</span>
<span class="t" style="left:685px;top:257px;">12</span>
<span class="t" style="left:721px;top:257px;">18</span>
<span class="s d" style="left:766px;top:268px;"><b>27</b>.Nov.</span>
<span class="t" style="left:795px;top:257px;">6</span>
<span class="t" style="left:829px;top:257px;">12</span>
<span class="t" style="left:865px;top:257px;">18</span>
<span class="s d" style="left:910px;top:268px;"><b>28</b>.Nov.</span>
<span class="t" style="left:939px;top:257px;">6</span>
<span class="t" style="left:973px;top:257px;">12</span>
<span class="t" style="left:1009px;top:257px;">18</span>
<span class="s r" style="left:7px;top:288px;"><b>100</b>%</span>
<span class="s r" style="left:7px;top:408px;"><b>0</b>%</span>
<span class="s" style="left:1059px;top:287px;"><b>64</b></span>
<span class="s" style="left:1059px;top:311px;"><b>51</b></span>
<span class="s" style="left:1059px;top:335px;"><b>38</b></span>
<span class="s" style="left:1059px;top:359px;"><b>26</b></span>
<span class="s" style="left:1059px;top:383px;"><b>13</b></span>
<span class="s" style="left:1059px;top:407px;"><b>0</b></span>
<span class="s d" style="left:46px;top:428px;"><b>29</b>.Nov.</span>
<span class="t" style="left:75px;top:417px;">6</span>
<span class="t" style="left:109px;top:417px;">12</span>
<span class="t" style="left:145px;top:417px;">18</span>
<span class="s d" style="left:190px;top:428px;"><b>30</b>.Nov.</span>
<span class="t" style="left:219px;top:417px;">6</span>
<span class="t" style="left:253px;top:417px;">12</span>
<span class="t" style="left:289px;top:417px;">18</span>
<span class="s d" style="left:334px;top:428px;"><b>01</b>.Dec.</span>
<span class="t" style="left:363px;top:417px;">6</span>
<span class="t" style="left:397px;top:417px;">12</span>
<span class="t" style="left:433px;top:417px;">18</span>
<span class="s d" style="left:478px;top:428px;"><b>02</b>.Dec.</span>
<span class="t" style="left:507px;top:417px;">6</span>
<span class="t" style="left:541px;top:417px;">12</span>
<span class="t" style="left:577px;top:417px;">18</span>
<span class="s d" style="left:622px;top:428px;"><b>03</b>.Dec.</span>
<span class="t" style="left:651px;top:417px;">6</span>
<span class="t" style="left:685px;top:417px;">12</span>
<span class="t" style="left:721px;top:417px;">18</span>
<span class="s d" style="left:766px;top:428px;"><b>04</b>.Dec.</span>
<span class="t" style="left:795px;top:417px;">6</span>
<span class="t" style="left:829px;top:417px;">12</span>
<span class="t" style="left:865px;top:417px;">18</span>
<span class="s d" style="left:910px;top:428px;"><b>05</b>.Dec.</span>
<span class="t" style="left:939px;top:417px;">6</span>
<span class="t" style="left:973px;top:417px;">12</span>
<span class="t" style="left:1009px;top:417px;">18</span>
<span class="s r" style="left:7px;top:448px;"><b>100</b>%</span>
<span class="s r" style="left:7px;top:568px;"><b>0</b>%</span>
<span class="s" style="left:1059px;top:447px;"><b>64</b></span>
<span class="s" style="left:1059px;top:471px;"><b>51</b></span>
<span class="s" style="left:1059px;top:495px;"><b>38</b></span>
<span class="s" style="left:1059px;top:519px;"><b>26</b></span>
<span class="s" style="left:1059px;top:543px;"><b>13</b></span>
<span class="s" style="left:1059px;top:567px;"><b>0</b></span>
<span class="s d" style="left:46px;top:588px;"><b>06</b>.Dec.</span>
<span class="t" style="left:75px;top:577px;">6</span>
<span class="t" style="left:109px;top:577px;">12</span>
<span class="t" style="left:145px;top:577px;">18</span>
<span class="s d" style="left:190px;top:588px;"><b>07</b>.Dec.</span>
<span class="t" style="left:219px;top:577px;">6</span>
<span class="t" style="left:253px;top:577px;">12</span>
<span class="t" style="left:289px;top:577px;">18</span>
<span class="s d" style="left:334px;top:588px;"><b>08</b>.Dec.</span>
<span class="t" style="left:363px;top:577px;">6</span>
<span class="t" style="left:397px;top:577px;">12</span>
<span class="t" style="left:433px;top:577px;">18</span>
<span class="s d" style="left:478px;top:588px;"><b>09</b>.Dec.</span>
<span class="t" style="left:507px;top:577px;">6</span>
<span class="t" style="left:541px;top:577px;">12</span>
<span class="t" style="left:577px;top:577px;">18</span>
<span class="s d" style="left:622px;top:588px;"><b>10</b>.Dec.</span>
<span class="t" style="left:651px;top:577px;">6</span>
<span class="t" style="left:685px;top:577px;">12</span>
<span class="t" style="left:721px;top:577px;">18</span>
<span class="s d" style="left:766px;top:588px;"><b>11</b>.Dec.</span>
<span class="t" style="left:795px;top:577px;">6</span>
<span class="t" style="left:829px;top:577px;">12</span>
<span class="t" style="left:865px;top:577px;">18</span>
<span class="s d" style="left:910px;top:588px;"><b>12</b>.Dec.</span>
<span class="t" style="left:939px;top:577px;">6</span>
<span class="t" style="left:973px;top:577px;">12</span>
<span class="t" style="left:1009px;top:577px;">18</span>
<span class="s r" style="left:7px;top:608px;"><b>100</b>%</span>
<span class="s r" style="left:7px;top:728px;"><b>0</b>%</span>
<span class="s" style="left:1059px;top:607px;"><b>64</b></span>
<span class="s" style="left:1059px;top:631px;"><b>51</b></span>
<span class="s" style="left:1059px;top:655px;"><b>38</b></span>
<span class="s" style="left:1059px;top:679px;"><b>26</b></span>
<span class="s" style="left:1059px;top:703px;"><b>13</b></span>
<span class="s" style="left:1059px;top:727px;"><b>0</b></span>
<span class="s d" style="left:46px;top:748px;"><b>13</b>.Dec.</span>
<span class="t" style="left:75px;top:737px;">6</span>
<span class="t" style="left:109px;top:737px;">12</span>
<span class="t" style="left:145px;top:737px;">18</span>
<span class="s d" style="left:190px;top:748px;"><b>14</b>.Dec.</span>
<span class="t" style="left:219px;top:737px;">6</span>
<span class="t" style="left:253px;top:737px;">12</span>
<span class="t" style="left:289px;top:737px;">18</span>
<span class="s d" style="left:334px;top:748px;"><b>15</b>.Dec.</span>
<span class="t" style="left:363px;top:737px;">6</span>
<span class="t" style="left:397px;top:737px;">12</span>
<span class="t" style="left:433px;top:737px;">18</span>
<span class="s d" style="left:478px;top:748px;"><b>16</b>.Dec.</span>
<span class="t" style="left:507px;top:737px;">6</span>
<span class="t" style="left:541px;top:737px;">12</span>
<span class="t" style="left:577px;top:737px;">18</span>
<span class="s d" style="left:622px;top:748px;"><b>17</b>.Dec.</span>
<span class="t" style="left:651px;top:737px;">6</span>
<span class="t" style="left:685px;top:737px;">12</span>
<span class="t" style="left:721px;top:737px;">18</span>
<span class="s d" style="left:766px;top:748px;"><b>18</b>.Dec.</span>
<span class="t" style="left:795px;top:737px;">6</span>
<span class="t" style="left:829px;top:737px;">12</span>
<span class="t" style="left:865px;top:737px;">18</span>
<span class="s d" style="left:910px;top:748px;"><b>19</b>.Dec.</span>
<span class="t" style="left:939px;top:737px;">6</span>
<span class="t" style="left:973px;top:737px;">12</span>
<span class="t" style="left:1009px;top:737px;">18</span>
<span class="b h" style="left:2.5px;top:3px;">Detector activity; Detector: 1531, Region: Japan, Time Zone: +9 h</span>
<span class="b h" style="left:2.5px;top:33px;">Background colors:</span>
<span class="b" style="left:17.5px;top:48px;">unknown</span>
<span class="b" style="left:17.5px;top:63px;">offline</span>
<span class="b" style="left:17.5px;top:78px;">idle</span>
<span class="b" style="left:17.5px;top:93px;">running</span>
<span class="b" style="left:17.5px;top:108px;">interference mode</span>
<span class="b" style="left:207.5px;top:33px;">invalid data</span>
<span class="b" style="left:207.5px;top:48px;">invalid signal</span>
<span class="b" style="left:207.5px;top:63px;">bad gps</span>
<span class="b" style="left:207.5px;top:78px;">no amplifiers connected</span>
<span class="b" style="left:207.5px;top:93px;">controller fault</span>
<span class="b" style="left:207.5px;top:108px;">communication error</span>
<span class="b h" style="left:380.5px;top:33px;">Signals line colors:</span>
<span class="b" style="left:395.5px;top:48px;">total (max = 64)</span>
<span class="b" style="left:395.5px;top:63px;">valid/total</span>
<span class="b" style="left:395.5px;top:78px;">involved/valid</span>
<span class="b" style="left:395.5px;top:93px;">used/involved</span>
</div>
</body>
</html>
